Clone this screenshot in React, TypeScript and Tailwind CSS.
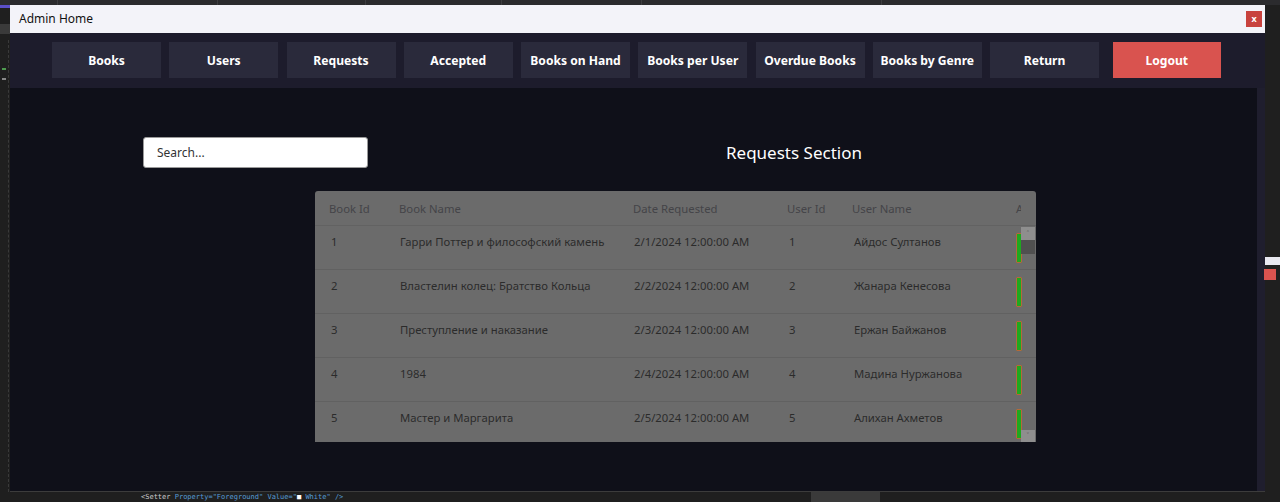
const navItems = [
  'Books',
  'Users',
  'Requests',
  'Accepted',
  'Books on Hand',
  'Books per User',
  'Overdue Books',
  'Books by Genre',
  'Return',
]

const rows = [
  { id: 1, name: 'Гарри Поттер и философский камень', date: '2/1/2024 12:00:00 AM', user: 1, userName: 'Айдос Султанов' },
  { id: 2, name: 'Властелин колец: Братство Кольца', date: '2/2/2024 12:00:00 AM', user: 2, userName: 'Жанара Кенесова' },
  { id: 3, name: 'Преступление и наказание', date: '2/3/2024 12:00:00 AM', user: 3, userName: 'Ержан Байжанов' },
  { id: 4, name: '1984', date: '2/4/2024 12:00:00 AM', user: 4, userName: 'Мадина Нуржанова' },
  { id: 5, name: 'Мастер и Маргарита', date: '2/5/2024 12:00:00 AM', user: 5, userName: 'Алихан Ахметов' },
]

const ui = { fontFamily: "'Noto Sans', 'Open Sans', sans-serif" }

function TitleBar() {
  return (
    <div className="flex h-[28px] items-center justify-between bg-[#f3f3f9] pl-[9px] pr-[3px]">
      <span className="text-[12px] text-[#111]">Admin Home</span>
      <div className="flex h-[16px] w-[16px] items-center justify-center bg-[#c8423e] pb-[1px] text-[9px] font-bold leading-none text-white">
        x
      </div>
    </div>
  )
}

function NavBar() {
  return (
    <div className="flex h-[55px] items-start gap-[8.25px] bg-[#1d1c2c] pl-[42px] pt-[9px]">
      {navItems.map((item) => (
        <div
          key={item}
          className="flex h-[36px] w-[109px] shrink-0 items-center justify-center bg-[#2a2a3b] pt-[3px] text-[12.1px] font-bold text-white"
        >
          {item}
        </div>
      ))}
      <div className="ml-[5.5px] flex h-[36px] w-[108px] shrink-0 items-center justify-center bg-[#d9534f] pt-[3px] text-[12.1px] font-bold text-white">
        Logout
      </div>
    </div>
  )
}

function RequestsTable() {
  return (
    <div className="relative ml-[305px] mt-[23px] h-[251px] w-[721px] overflow-hidden rounded-t-[3px] bg-[#6b6b6b] text-[11.3px]">
      <div className="flex h-[35px] items-center border-b border-[#626262] pt-[2px] text-[#444448]">
        <div className="w-[70px] shrink-0 pl-[14px]">Book Id</div>
        <div className="w-[234px] shrink-0 pl-[14px]">Book Name</div>
        <div className="w-[154px] shrink-0 pl-[14px]">Date Requested</div>
        <div className="w-[65px] shrink-0 pl-[14px]">User Id</div>
        <div className="w-[164px] shrink-0 pl-[14px]">User Name</div>
        <div className="w-[19px] shrink-0 overflow-hidden whitespace-nowrap pl-[14px]">Actions</div>
      </div>
      {rows.map((r) => (
        <div key={r.id} className="flex h-[44px] items-start border-b border-[#616161] pt-[7px] text-[#2b2b2b]">
          <div className="w-[70px] shrink-0 pl-[16px] leading-[17px]">{r.id}</div>
          <div className="w-[234px] shrink-0 pl-[15px] leading-[17px]">{r.name}</div>
          <div className="w-[154px] shrink-0 pl-[15px] leading-[17px]">{r.date}</div>
          <div className="w-[65px] shrink-0 pl-[16px] leading-[17px]">{r.user}</div>
          <div className="w-[164px] shrink-0 pl-[16px] leading-[17px]">{r.userName}</div>
          <div className="shrink-0 pl-[14px]">
            <div className="h-[30px] w-[6px] rounded-[1px] border border-[#b5693a] bg-[#1fa81f]" />
          </div>
        </div>
      ))}
      {/* scrollbar */}
      <div className="absolute right-[1px] top-[36px] flex h-[215px] w-[14px] flex-col justify-between">
        <div>
          <div className="flex h-[13px] items-center justify-center bg-[#8e8e8e] text-[8px] leading-none text-[#5a5a5a]">
            ˄
          </div>
          <div className="h-[14px] bg-[#505050]" />
        </div>
        <div className="flex h-[12px] items-center justify-center bg-[#8e8e8e] text-[8px] leading-none text-[#5a5a5a]">
          ˅
        </div>
      </div>
    </div>
  )
}

export default function App() {
  return (
    <div className="relative h-[502px] w-[1280px] overflow-hidden bg-[#1f1f1f]" style={ui}>
      {/* editor chrome behind the window */}
      <div className="flex h-[5px] bg-[#2b2b2e]">
        <div className="w-[58px] border-r border-[#3d3d40]" />
        <div className="w-[160px] border-r border-[#3d3d40]" />
        <div className="w-[148px] border-r border-[#3d3d40]" />
        <div className="w-[136px] border-r border-[#3d3d40]" />
        <div className="w-[140px] border-r border-[#3d3d40]" />
        <div className="w-[240px] border-r border-[#3d3d40]" />
      </div>
      <div className="absolute left-[8px] top-[40px] h-[452px] border-l border-dashed border-[#3a3a3a]" />
      <div className="absolute left-[0px] top-[5px] h-[3px] w-[10px] bg-[#5b4fc7]" />
      <div className="absolute left-[0px] top-[24px] h-[10px] w-[10px] bg-[#3a3a3a]" />
      <div className="absolute left-[2px] top-[68px] h-[2px] w-[4px] bg-[#4e9a4e]" />
      <div className="absolute left-[2px] top-[78px] h-[2px] w-[4px] bg-[#888]" />
      <div className="absolute right-[0px] top-[257px] h-[8px] w-[15px] bg-[#e8e8f0]" />
      <div className="absolute right-[4px] top-[269px] h-[11px] w-[12px] bg-[#d9534f]" />
      <div className="absolute left-[811px] top-[492px] h-[10px] w-[69px] bg-[#3a3a3a]" />
      <div
        className="absolute left-[141px] top-[493px] whitespace-nowrap text-[7px] leading-[8px] text-[#569cd6]"
        style={{ fontFamily: "'DejaVu Sans Mono', monospace" }}
      >
        <span className="text-[#ccc]">&lt;Setter</span> Property="Foreground" Value="<span className="text-white">■</span> White" /&gt;
      </div>

      {/* the window */}
      <div className="ml-[10px] flex h-[487px] w-[1255px] flex-col border-b border-[#3c3c3c]">
        <TitleBar />
        <NavBar />
        <div className="flex flex-1 bg-[#1f1e2e]">
          <div className="w-[1247px] bg-[#0f1019]">
            <div className="flex items-center pl-[133px] pt-[49px]">
              <div className="flex h-[31px] w-[225px] items-center rounded-[3px] border border-[#9a9a9a] bg-white pl-[13px] text-[12px] text-[#333]">
                Search...
              </div>
              <div className="ml-[358px] text-[17px] text-white">Requests Section</div>
            </div>
            <RequestsTable />
          </div>
        </div>
      </div>
    </div>
  )
}
